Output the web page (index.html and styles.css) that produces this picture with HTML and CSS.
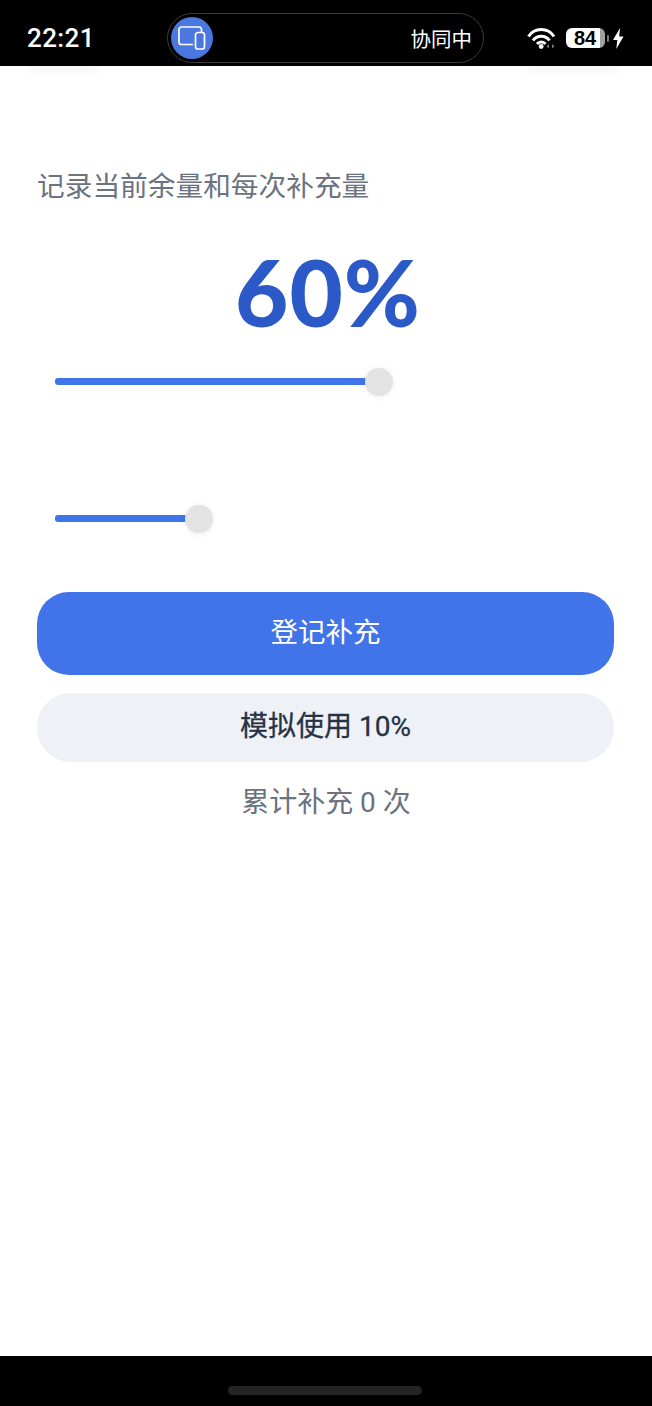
FILE: index.html
```html
<!DOCTYPE html>
<html lang="zh-CN">
<head>
  <meta charset="UTF-8" />
  <meta name="viewport" content="width=device-width, initial-scale=1.0"/>
  <title>补充记录</title>
  <link rel="stylesheet" href="styles.css">
</head>
<body>

  <!-- STATUS BAR -->
  <header class="status-bar">
    <span class="time">22:21</span>
    <div class="island">
      <span class="island-icon">
        <svg width="30" height="26" viewBox="0 0 30 26" fill="none" stroke="#fff" stroke-width="1.7">
          <path d="M16 19.500H4.500a2.500 2.500 0 0 1-2.500-2.500V4.500A2.500 2.500 0 0 1 4.500 2h17.500a2.500 2.500 0 0 1 2.500 2.500V7"/>
          <rect x="18.500" y="7.500" width="9" height="16.500" rx="2.500"/>
        </svg>
      </span>
      <span class="island-text">协同中</span>
    </div>
    <div class="status-icons">
      <svg class="wifi" width="30" height="22" viewBox="0 0 30 22" fill="none" stroke="#fff" stroke-width="3">
        <path d="M1.500 9.500a15 15 0 0 1 25.500 0"/>
        <path d="M6 13.500a10 10 0 0 1 16.500 0"/>
        <path d="M10 17a5.500 5.500 0 0 1 8.500 0"/>
        <circle cx="14.200" cy="19.500" r="2.400" fill="#fff" stroke="none"/>
        <path d="M22 17l-2.500 2.200 2.500 2.200zM25 17l2.500 2.200-2.500 2.200z" fill="#777" stroke="none"/>
      </svg>
      <span class="battery"><span class="battery-level">84</span></span>
      <span class="battery-cap"></span>
      <svg class="bolt" width="11" height="21" viewBox="0 0 11 21" fill="#fff">
        <path d="M7 0L0 12h4.300L3.300 21l7.200-12.500H6.200z"/>
      </svg>
    </div>
  </header>

  <main class="content">
    <div class="bar-shadow bar-shadow-left"></div>
    <div class="bar-shadow bar-shadow-right"></div>

    <p class="intro">记录当前余量和每次补充量</p>
    <div class="percent">60%</div>

    <div class="slider slider-level">
      <div class="slider-fill"></div>
      <div class="slider-thumb"></div>
    </div>

    <div class="slider slider-amount">
      <div class="slider-fill"></div>
      <div class="slider-thumb"></div>
    </div>

    <button class="btn btn-primary">登记补充</button>
    <button class="btn btn-secondary">模拟使用 10%</button>
    <p class="total">累计补充 0 次</p>
  </main>

  <!-- NAV BAR -->
  <footer class="nav-bar">
    <div class="home-indicator"></div>
  </footer>

</body>
</html>
```

FILE: styles.css
```css
* {
  box-sizing: border-box;
}

html, body {
  height: 100%;
}

body {
  font-family: Roboto, "Noto Sans CJK SC", sans-serif;
  margin: 0;
  padding: 0;
  background-color: #fff;
  color: #1f2937;
  display: flex;
  flex-direction: column;
  overflow: hidden;
}

.status-bar {
  height: 66px;
  flex-shrink: 0;
  background-color: #000;
  color: #fff;
  display: flex;
  align-items: center;
  padding: 10px 27px 0 27px;
}

.time {
  font-size: 26px;
  font-weight: 500;
  letter-spacing: 0.4px;
  width: 140px;
  margin-bottom: 1px;
}

.island {
  width: 317px;
  height: 50px;
  border: 1px solid #3a3a3a;
  border-radius: 25px;
  display: flex;
  align-items: center;
  justify-content: space-between;
  padding: 0 11px 0 3px;
}

.island-icon {
  width: 42px;
  height: 42px;
  border-radius: 50%;
  background-color: #4a78e0;
  display: flex;
  align-items: center;
  justify-content: center;
}

.island-text {
  font-family: "Noto Sans CJK SC", sans-serif;
  font-size: 20.500px;
}

.status-icons {
  display: flex;
  align-items: center;
  margin-left: auto;
  margin-right: 1px;
}

.wifi {
  margin-right: 9px;
}

.battery {
  width: 39px;
  height: 20px;
  border-radius: 6px;
  background: linear-gradient(to right, #fff 87%, #a0a0a0 87%);
  display: flex;
  align-items: center;
  justify-content: center;
}

.battery-level {
  font-family: "Liberation Sans", sans-serif;
  font-size: 20px;
  font-weight: 700;
  color: #000;
}

.battery-cap {
  width: 2.500px;
  height: 7px;
  margin-left: 2px;
  background-color: #777;
  border-radius: 1px;
}

.bolt {
  margin-left: 4px;
}

.content {
  flex: 1;
  padding: 0 38px;
  background-color: #fff;
  position: relative;
  overflow: hidden;
}

/* faint smudges just under the status bar */
.bar-shadow {
  position: absolute;
  top: -6px;
  height: 12px;
  border-radius: 20px;
  background-color: #f6f6f6;
  filter: blur(4px);
}

.bar-shadow-left {
  left: 28px;
  width: 70px;
}

.bar-shadow-right {
  left: 526px;
  width: 95px;
}

.intro {
  margin: 102px 0 0 -1px;
  font-size: 27.700px;
  line-height: 38px;
  color: #6b7280;
}

.percent {
  margin-top: 31px;
  padding-left: 4px;
  font-family: Lato, sans-serif;
  font-size: 92px;
  font-weight: 900;
  letter-spacing: 1px;
  line-height: 110px;
  text-align: center;
  color: #2b5ac8;
}

.slider {
  position: relative;
  height: 7px;
  margin-left: 17px;
}

.slider-level {
  width: 324px;
  margin-top: 31px;
}

.slider-amount {
  width: 144px;
  margin-top: 130px;
}

.slider-fill {
  height: 7px;
  width: 100%;
  border-radius: 3px;
  background-color: #4274e9;
}

.slider-thumb {
  position: absolute;
  top: -10px;
  right: -14px;
  width: 28px;
  height: 28px;
  border-radius: 50%;
  background-color: #e3e3e3;
  box-shadow: 0 1px 6px rgba(0, 0, 0, 0.08);
}

.btn {
  display: block;
  width: 577px;
  margin-left: -1px;
  padding: 0 0 8px 0;
  border: none;
  font-family: inherit;
}

.btn-primary {
  height: 83px;
  margin-top: 70px;
  border-radius: 32px;
  background-color: #4274e9;
  color: #fff;
  font-size: 27.500px;
}

.btn-secondary {
  height: 69px;
  margin-top: 18px;
  border-radius: 34px;
  background-color: #eef1f5;
  color: #273244;
  font-size: 28px;
  font-weight: 400;
  -webkit-text-stroke: 0.3px #273244;
}

.total {
  margin: 22px 0 0 0;
  font-size: 28px;
  line-height: 38px;
  text-align: center;
  color: #6b7280;
}

.nav-bar {
  height: 50px;
  flex-shrink: 0;
  background-color: #000;
  display: flex;
  justify-content: center;
  padding-top: 30px;
}

.home-indicator {
  width: 194px;
  height: 9px;
  margin-right: 2px;
  border-radius: 5px;
  background-color: #242424;
}
```
